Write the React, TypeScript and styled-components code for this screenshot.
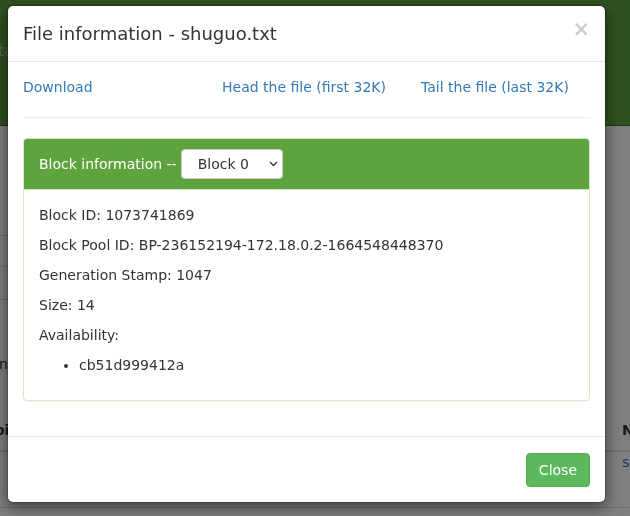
import React from "react";
import styled, { createGlobalStyle } from "styled-components";

const Global = createGlobalStyle`
  html, body { margin: 0; padding: 0; }
  body {
    font-family: "DejaVu Sans", "Noto Sans", sans-serif;
    font-size: 14px;
    line-height: 1.42857;
    color: #333;
    background: #fff;
    overflow: hidden;
  }
  * { box-sizing: border-box; }
`;

/* ---------- background page ---------- */
const Page = styled.div`
  width: 630px;
  height: 516px;
  overflow: hidden;
`;

const Navbar = styled.div`
  height: 126px;
  background: #5fa33e;
  border-bottom: 1px solid #3c6a26;
  display: flex;
  align-items: flex-start;
  padding-top: 40px;
`;

const NavText = styled.span`
  font-size: 16px;
  color: #b7c2b2;
  margin-left: -2px;
`;

const BgLine = styled.div<{ $top: number; $width?: number }>`
  margin-top: ${(p) => p.$top}px;
  width: ${(p) => (p.$width ? `${p.$width}px` : "100%")};
  border-top: 1px solid #ddd;
`;

const BgText = styled.div<{ $top: number }>`
  margin-top: ${(p) => p.$top}px;
  line-height: 20px;
  margin-left: -1px;
`;

const BgTableHead = styled.div`
  margin-top: 46px;
  display: flex;
  justify-content: space-between;
  font-weight: bold;
  line-height: 20px;
  padding-bottom: 10px;
  border-bottom: 2px solid #ddd;
`;

const BgRow = styled.div`
  display: flex;
  justify-content: space-between;
  line-height: 20px;
  height: 56px;
  border-bottom: 1px solid #ddd;
`;

const BgCellLeft = styled.span`
  margin-left: -5px;
`;

const BgCellRight = styled.span<{ $link?: boolean }>`
  width: 8px;
  overflow: hidden;
  white-space: nowrap;
  color: ${(p) => (p.$link ? "#337ab7" : "inherit")};
`;

/* ---------- overlay & modal ---------- */
const Backdrop = styled.div`
  position: fixed;
  inset: 0;
  background: rgba(0, 0, 0, 0.5);
`;

const Modal = styled.div`
  position: fixed;
  top: 5px;
  left: 7px;
  width: 599px;
  background: #fff;
  border: 1px solid rgba(0, 0, 0, 0.2);
  border-radius: 6px;
  box-shadow: 0 5px 15px rgba(0, 0, 0, 0.5);
  background-clip: padding-box;
`;

const Header = styled.div`
  display: flex;
  justify-content: space-between;
  align-items: flex-start;
  padding: 15px;
  border-bottom: 1px solid #e5e5e5;
`;

const Title = styled.h4`
  margin: 0;
  font-size: 18px;
  font-weight: 500;
  line-height: 25px;
  color: #333;
`;

const CloseX = styled.button`
  margin-top: -2px;
  padding: 0;
  border: 0;
  background: transparent;
  font-family: "DejaVu Sans", sans-serif;
  font-size: 21px;
  font-weight: bold;
  line-height: 1;
  color: #000;
  opacity: 0.2;
  text-shadow: 0 1px 0 #fff;
  cursor: pointer;
`;

const Body = styled.div`
  padding: 15px;
`;

const LinkRow = styled.div`
  display: grid;
  grid-template-columns: repeat(3, 1fr);
  margin: 0 -15px;
`;

const LinkCell = styled.div`
  padding: 0 15px;
  line-height: 20px;
`;

const Link = styled.a`
  color: #337ab7;
  text-decoration: none;
`;

const Rule = styled.hr`
  margin: 20px 0;
  border: 0;
  border-top: 1px solid #eee;
`;

const Panel = styled.div`
  border: 1px solid #d6e9c6;
  border-radius: 4px;
  margin-bottom: 20px;
  box-shadow: 0 1px 1px rgba(0, 0, 0, 0.05);
`;

const PanelHeading = styled.div`
  display: flex;
  align-items: center;
  gap: 4px;
  padding: 10px 15px;
  background: #5fa33e;
  color: #fff;
  border-bottom: 1px solid #d6e9c6;
  border-radius: 3px 3px 0 0;
  line-height: 20px;
`;

const SelectWrap = styled.div`
  position: relative;
  display: inline-flex;
`;

const Select = styled.select`
  appearance: none;
  -webkit-appearance: none;
  height: 30px;
  width: 102px;
  padding: 0 20px 0 16px;
  font-family: "DejaVu Sans", sans-serif;
  font-size: 14px;
  color: #333;
  background: #fff;
  border: 1px solid #ccc;
  border-radius: 4px;
`;

const Chevron = styled.svg`
  position: absolute;
  right: 5px;
  top: 12px;
  pointer-events: none;
`;

const PanelBody = styled.div`
  padding: 15px;
`;

const Para = styled.p`
  margin: 0 0 10px;
  line-height: 20px;
`;

const List = styled.ul`
  margin: 1px 0 10px;
  padding-left: 40px;
  line-height: 20px;
`;

const Footer = styled.div`
  display: flex;
  justify-content: flex-end;
  padding: 16px 15px 15px;
  border-top: 1px solid #e5e5e5;
`;

const Button = styled.button`
  padding: 6px 12px;
  font-family: "DejaVu Sans", sans-serif;
  font-size: 14px;
  line-height: 20px;
  color: #fff;
  background: #5cb85c;
  border: 1px solid #4cae4c;
  border-radius: 4px;
  cursor: pointer;
`;

export default function App() {
  return (
    <>
      <Global />
      <Page>
        <Navbar>
          <NavText>ta</NavText>
        </Navbar>
        <BgLine $top={109} $width={300} />
        <BgLine $top={30} $width={300} />
        <BgLine $top={32} $width={300} />
        <BgText $top={54}>nt</BgText>
        <BgTableHead>
          <BgCellLeft>oi</BgCellLeft>
          <BgCellRight>Name</BgCellRight>
        </BgTableHead>
        <BgRow>
          <BgCellLeft />
          <BgCellRight $link>shuguo.txt</BgCellRight>
        </BgRow>
      </Page>
      <Backdrop />
      <Modal>
        <Header>
          <Title>File information - shuguo.txt</Title>
          <CloseX aria-label="Close">×</CloseX>
        </Header>
        <Body>
          <LinkRow>
            <LinkCell>
              <Link href="#">Download</Link>
            </LinkCell>
            <LinkCell>
              <Link href="#">Head the file (first 32K)</Link>
            </LinkCell>
            <LinkCell>
              <Link href="#">Tail the file (last 32K)</Link>
            </LinkCell>
          </LinkRow>
          <Rule />
          <Panel>
            <PanelHeading>
              Block information --
              <SelectWrap>
                <Select defaultValue="0">
                  <option value="0">Block 0</option>
                </Select>
                <Chevron width="9" height="6" viewBox="0 0 9 6" aria-hidden="true">
                  <path
                    d="M1 1 L4.5 4.5 L8 1"
                    fill="none"
                    stroke="#333"
                    strokeWidth="1.3"
                  />
                </Chevron>
              </SelectWrap>
            </PanelHeading>
            <PanelBody>
              <Para>Block ID: 1073741869</Para>
              <Para>Block Pool ID: BP-236152194-172.18.0.2-1664548448370</Para>
              <Para>Generation Stamp: 1047</Para>
              <Para>Size: 14</Para>
              <Para>Availability:</Para>
              <List>
                <li>cb51d999412a</li>
              </List>
            </PanelBody>
          </Panel>
        </Body>
        <Footer>
          <Button>Close</Button>
        </Footer>
      </Modal>
    </>
  );
}
